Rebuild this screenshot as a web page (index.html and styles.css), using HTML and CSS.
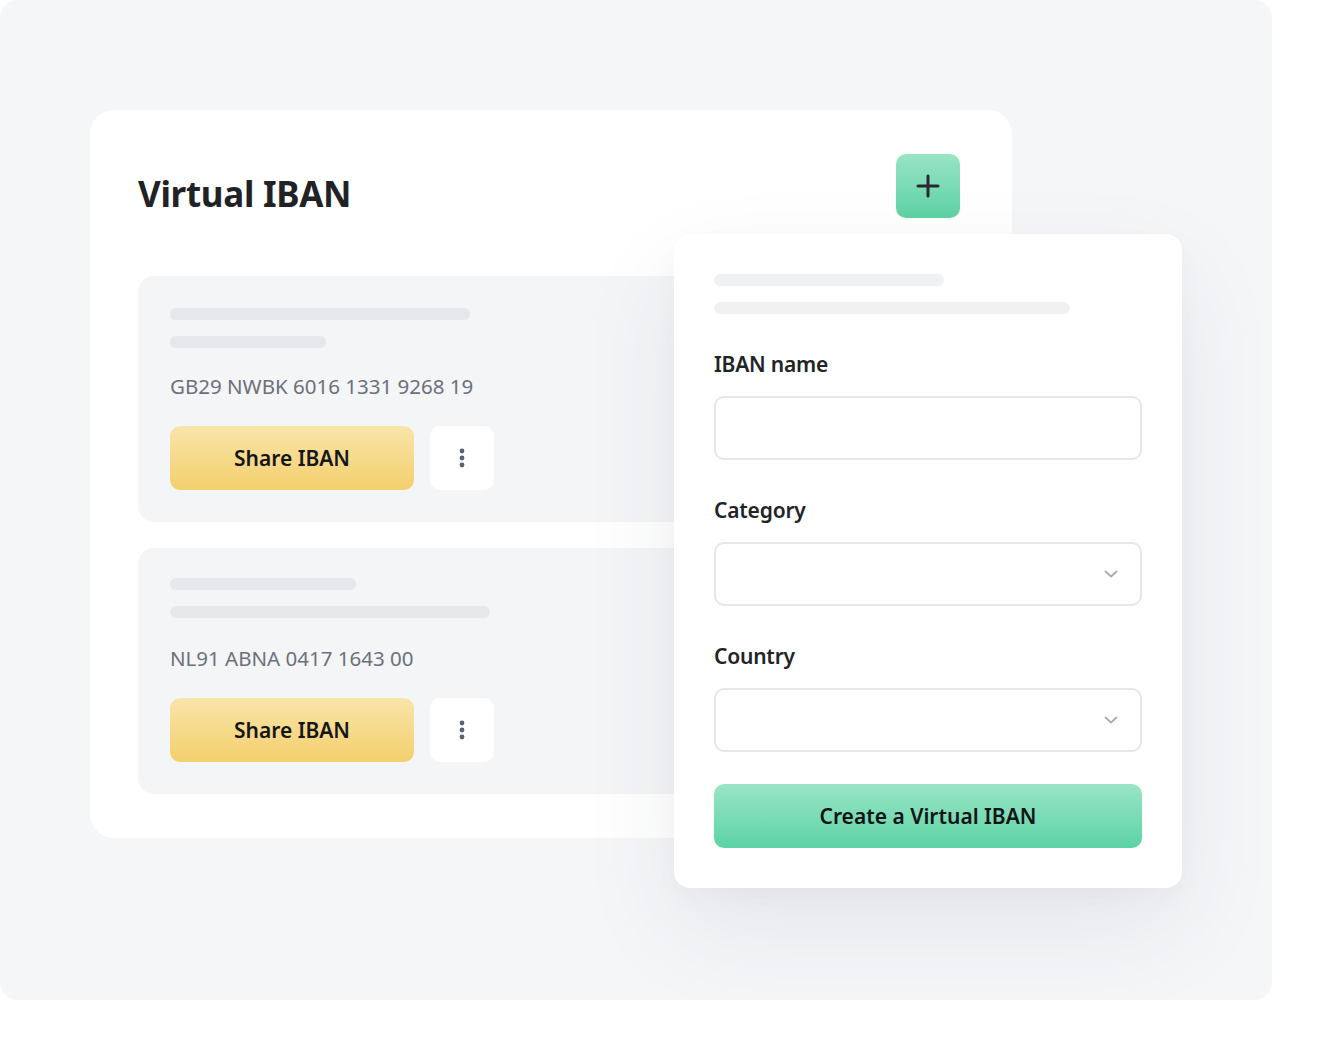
FILE: index.html
```html
<!DOCTYPE html>
<html lang="en">
<head>
<meta charset="utf-8">
<title>Virtual IBAN</title>
<link rel="stylesheet" href="styles.css">
</head>
<body>
<div class="stage">
  <section class="card">
    <header class="card-head">
      <h1 class="title">Virtual IBAN</h1>
      <button class="add-btn" aria-label="Add">
        <svg width="24" height="24" viewBox="0 0 24 24"><path d="M12 2v20M2 12h20" stroke="#262a30" stroke-width="3" stroke-linecap="round" fill="none"/></svg>
      </button>
    </header>
    <div class="item">
      <div class="bar bar-300"></div>
      <div class="bar bar-156"></div>
      <p class="iban">GB29 NWBK 6016 1331 9268 19</p>
      <div class="actions">
        <button class="share-btn">Share IBAN</button>
        <button class="more-btn" aria-label="More">
          <svg width="6" height="20" viewBox="0 0 6 20"><circle cx="3" cy="3" r="2.4" fill="#5b6170"/><circle cx="3" cy="10" r="2.4" fill="#5b6170"/><circle cx="3" cy="17" r="2.4" fill="#5b6170"/></svg>
        </button>
      </div>
    </div>
    <div class="item item-second">
      <div class="bar bar-186"></div>
      <div class="bar bar-320"></div>
      <p class="iban">NL91 ABNA 0417 1643 00</p>
      <div class="actions">
        <button class="share-btn">Share IBAN</button>
        <button class="more-btn" aria-label="More">
          <svg width="6" height="20" viewBox="0 0 6 20"><circle cx="3" cy="3" r="2.4" fill="#5b6170"/><circle cx="3" cy="10" r="2.4" fill="#5b6170"/><circle cx="3" cy="17" r="2.4" fill="#5b6170"/></svg>
        </button>
      </div>
    </div>
  </section>

  <form class="form-card">
    <div class="fbar fbar-230"></div>
    <div class="fbar fbar-356"></div>
    <label class="label label-first">IBAN name</label>
    <div class="field"></div>
    <label class="label">Category</label>
    <div class="field select">
      <svg width="14" height="8" viewBox="0 0 14 8"><path d="M1.5 1.5l5.5 5 5.5-5" stroke="#a7abb3" stroke-width="1.8" fill="none" stroke-linecap="round" stroke-linejoin="round"/></svg>
    </div>
    <label class="label">Country</label>
    <div class="field select">
      <svg width="14" height="8" viewBox="0 0 14 8"><path d="M1.5 1.5l5.5 5 5.5-5" stroke="#a7abb3" stroke-width="1.8" fill="none" stroke-linecap="round" stroke-linejoin="round"/></svg>
    </div>
    <button type="button" class="create-btn">Create a Virtual IBAN</button>
  </form>
</div>
</body>
</html>
```

FILE: styles.css
```css
* { box-sizing: border-box; }

html, body {
  margin: 0;
  padding: 0;
  background: #ffffff;
  font-family: "Noto Sans", "Open Sans", sans-serif;
}

.stage {
  position: relative;
  width: 1272px;
  height: 1000px;
  background: #f5f6f8;
  border-radius: 18px;
  padding: 110px 0 0 90px;
}

.card {
  width: 922px;
  height: 728px;
  background: #ffffff;
  border-radius: 24px;
  padding: 44px 52px 44px 48px;
}

.card-head {
  display: flex;
  justify-content: space-between;
  align-items: flex-start;
  margin-bottom: 58px;
}

.title {
  margin: 16px 0 0;
  font-size: 35px;
  line-height: 48px;
  font-weight: 700;
  color: #212226;
  letter-spacing: -0.3px;
}

.add-btn {
  width: 64px;
  height: 64px;
  border: none;
  border-radius: 10px;
  background: linear-gradient(180deg, #98e4c5 0%, #5dd2a3 100%);
  display: flex;
  align-items: center;
  justify-content: center;
  padding: 0;
}

.item {
  background: #f4f5f7;
  border-radius: 16px;
  padding: 32px 32px 32px 32px;
  height: 246px;
}

.item-second {
  margin-top: 26px;
  padding-top: 30px;
}

.bar {
  height: 12px;
  border-radius: 6px;
  background: #e6e7ea;
}
.bar + .bar { margin-top: 16px; }
.bar-300 { width: 300px; }
.bar-156 { width: 156px; }
.bar-186 { width: 186px; }
.bar-320 { width: 320px; }

.iban {
  margin: 24px 0 26px;
  font-size: 20.5px;
  line-height: 28px;
  color: #6b707b;
  letter-spacing: 0;
}
.item-second .iban { margin-top: 26px; }

.actions {
  display: flex;
  gap: 16px;
}

.share-btn {
  width: 244px;
  height: 64px;
  border: none;
  border-radius: 10px;
  background: linear-gradient(180deg, #f9e5ab 0%, #f3cf6c 100%);
  font-family: inherit;
  font-size: 21px;
  font-weight: 600;
  color: #15161a;
  letter-spacing: 0;
}

.more-btn {
  width: 64px;
  height: 64px;
  border: none;
  border-radius: 10px;
  background: #ffffff;
  display: flex;
  align-items: center;
  justify-content: center;
  padding: 0;
}

.form-card {
  position: absolute;
  left: 674px;
  top: 234px;
  width: 508px;
  height: 654px;
  margin: 0;
  background: #ffffff;
  border-radius: 16px;
  padding: 40px;
  box-shadow: 0 40px 100px rgba(40, 50, 80, 0.08), 0 10px 30px rgba(40, 50, 80, 0.025);
  display: flex;
  flex-direction: column;
}

.fbar {
  height: 12px;
  border-radius: 6px;
  background: #f0f1f3;
}
.fbar + .fbar { margin-top: 16px; }
.fbar-230 { width: 230px; }
.fbar-356 { width: 356px; }

.label {
  display: block;
  font-size: 21px;
  line-height: 30px;
  font-weight: 600;
  color: #222327;
  margin: 35px 0 17px;
  letter-spacing: -0.2px;
}
.label-first { margin-top: 35px; }

.field {
  height: 64px;
  border: 2px solid #e6e7eb;
  border-radius: 10px;
  background: #ffffff;
  flex: none;
}

.select {
  display: flex;
  align-items: center;
  justify-content: flex-end;
  padding-right: 22px;
}

.create-btn {
  margin-top: 32px;
  height: 64px;
  border: none;
  border-radius: 10px;
  background: linear-gradient(180deg, #9ae5c7 0%, #5cd3a4 100%);
  font-family: inherit;
  font-size: 21px;
  font-weight: 600;
  color: #121417;
  letter-spacing: 0;
}
```
